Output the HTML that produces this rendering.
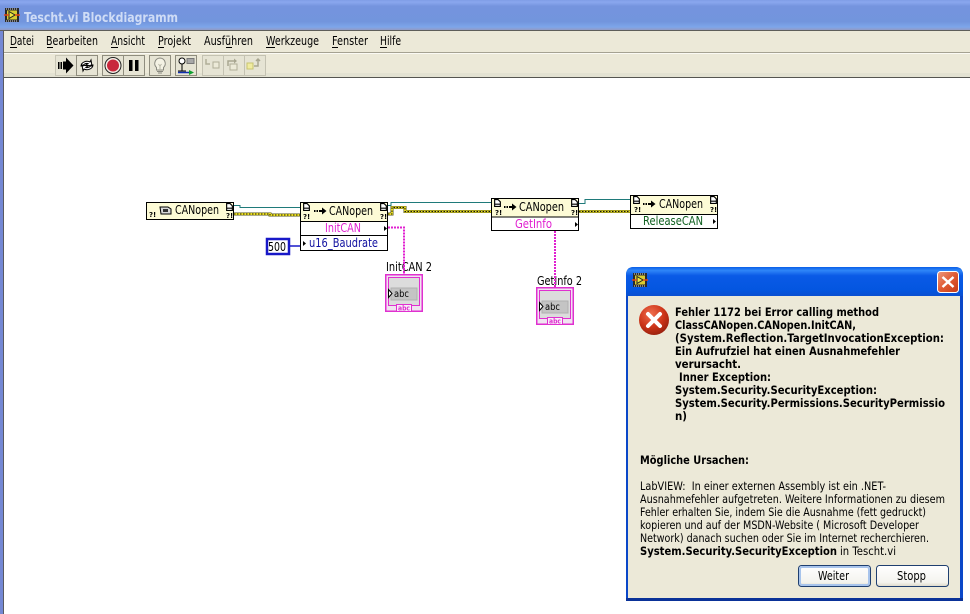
<!DOCTYPE html>
<html><head><meta charset="utf-8"><title>Tescht.vi Blockdiagramm</title>
<style>
html,body{margin:0;padding:0;background:#fff;width:970px;height:614px;overflow:hidden}
svg{display:block}
text{font-family:"DejaVu Sans","Liberation Sans",sans-serif;font-size:11.5px;fill:#000;white-space:pre}
.b{font-weight:bold}
.n{font-size:12px}
.q{font-size:7px;font-weight:bold}
</style></head><body>
<svg width="970" height="614" viewBox="0 0 970 614" xmlns="http://www.w3.org/2000/svg">
<defs>
<linearGradient id="tb" x1="0" y1="0" x2="0" y2="1">
<stop offset="0" stop-color="#7f9de6"/><stop offset=".07" stop-color="#8aa7ee"/><stop offset=".2" stop-color="#7594de"/><stop offset=".7" stop-color="#7295dd"/><stop offset=".87" stop-color="#7da6ea"/><stop offset=".95" stop-color="#8f9ccc"/><stop offset="1" stop-color="#8f94b0"/>
</linearGradient>
<linearGradient id="dt" x1="0" y1="0" x2="0" y2="1">
<stop offset="0" stop-color="#0a5fe8"/><stop offset=".12" stop-color="#2f86f8"/><stop offset=".3" stop-color="#0a5ae6"/><stop offset=".8" stop-color="#0456e0"/><stop offset="1" stop-color="#0a4fd0"/>
</linearGradient>
<radialGradient id="er" cx=".4" cy=".3" r=".8"><stop offset="0" stop-color="#f07050"/><stop offset=".55" stop-color="#cc3418"/><stop offset="1" stop-color="#8c1c0c"/></radialGradient>
<linearGradient id="cl" x1="0" y1="0" x2="1" y2="1"><stop offset="0" stop-color="#ec9a80"/><stop offset=".5" stop-color="#e05a32"/><stop offset="1" stop-color="#c43a16"/></linearGradient>
<linearGradient id="btn" x1="0" y1="0" x2="0" y2="1"><stop offset="0" stop-color="#fff"/><stop offset=".8" stop-color="#f4f3ee"/><stop offset="1" stop-color="#dcd8c8"/></linearGradient>
<symbol id="doc" viewBox="0 0 6 7" width="7" height="8"><path d="M.5.5H3.5L5.5 2.5V6.5H.5Z M.5 4.5H5.5" fill="#fff" stroke="#000" stroke-width="1"/></symbol>
<symbol id="arr" viewBox="0 0 13 8" width="13" height="8"><path d="M0 3h1.500v2H0zM2.500 3h1.500v2H2.500zM5 3h3V0.500L12.500 4 8 7.500V5H5z" fill="#000"/></symbol>
<symbol id="vi" viewBox="0 0 16 14" width="16" height="14"><rect x="1" y="0" width="14" height="14" fill="#2a2a2a"/><path d="M2 1h1M4 1h1M6 1h1M8 1h1M10 1h1M12 1h1M2 13h1M4 13h1M6 13h1M8 13h1M10 13h1M12 13h1" stroke="#ddd" stroke-width="1"/><rect x="3" y="2.500" width="10" height="9" fill="#d8cc30"/><path d="M5 3.500L11 7 5 10.500Z" fill="#f0e840" stroke="#222"/><path d="M0 7H5M11 7H16" stroke="#e04818" stroke-width="1.500"/></symbol>
</defs>

<!-- window chrome -->
<rect width="970" height="614" fill="#fff"/>
<rect width="970" height="31" fill="url(#tb)"/>
<rect y="30" width="970" height="1.500" fill="#5e5e5a"/>
<rect x="0" y="31" width="3" height="583" fill="#7488d4"/>
<rect x="3" y="31" width="1" height="583" fill="#5a5a60"/>
<rect x="4" y="31" width="966" height="21" fill="#ece9d8"/>
<rect x="4" y="52" width="966" height="1" fill="#a5a292"/>
<rect x="4" y="53" width="966" height="1" fill="#fbfaf4"/>
<rect x="4" y="54" width="966" height="23" fill="#ece9d8"/>
<rect x="4" y="73" width="966" height="4" fill="#e3e2d2"/>
<rect x="4" y="77" width="966" height="1" fill="#555550"/>

<use href="#vi" x="4" y="8"/>
<text class="b" x="24" y="22" style="font-size:13.500px;fill:#cfdcf6" textLength="154" lengthAdjust="spacingAndGlyphs">Tescht.vi Blockdiagramm</text>

<!-- menu -->
<g fill="#000">
<text class="n" x="10" y="45" textLength="24" lengthAdjust="spacingAndGlyphs">Datei</text><rect x="10" y="47" width="7" height="1"/>
<text class="n" x="46" y="45" textLength="52" lengthAdjust="spacingAndGlyphs">Bearbeiten</text><rect x="47" y="47" width="6" height="1"/>
<text class="n" x="111" y="45" textLength="34" lengthAdjust="spacingAndGlyphs">Ansicht</text><rect x="111" y="47" width="7" height="1"/>
<text class="n" x="158" y="45" textLength="33" lengthAdjust="spacingAndGlyphs">Projekt</text><rect x="158" y="47" width="6" height="1"/>
<text class="n" x="204" y="45" textLength="49" lengthAdjust="spacingAndGlyphs">Ausführen</text><rect x="226" y="47" width="6" height="1"/>
<text class="n" x="266" y="45" textLength="53" lengthAdjust="spacingAndGlyphs">Werkzeuge</text><rect x="266" y="47" width="9" height="1"/>
<text class="n" x="332" y="45" textLength="36" lengthAdjust="spacingAndGlyphs">Fenster</text><rect x="332" y="47" width="6" height="1"/>
<text class="n" x="380" y="45" textLength="21" lengthAdjust="spacingAndGlyphs">Hilfe</text><rect x="380" y="47" width="7" height="1"/>
</g>

<!-- toolbar -->
<g fill="#e6e4d4" stroke="#8f8d7e">
<rect x="55.500" y="55.500" width="21" height="20" stroke="#c8c6b6"/>
<rect x="76.500" y="55.500" width="21" height="20"/>
<rect x="102.500" y="55.500" width="21" height="20"/><rect x="123.500" y="55.500" width="21" height="20"/>
<rect x="149.500" y="55.500" width="21" height="20"/>
<rect x="175.500" y="55.500" width="21" height="20"/>
<rect x="202.500" y="55.500" width="21" height="20" stroke="#c4c2b2"/><rect x="223.500" y="55.500" width="21" height="20" stroke="#c4c2b2"/><rect x="244.500" y="55.500" width="21" height="20" stroke="#c4c2b2"/>
</g>
<path d="M58 62h1.500v7H58zM60.500 62h1.500v7h-1.500zM63 61.500h3V57.500l7.500 8-7.500 8v-4h-3z" fill="#000"/>
<path d="M81 66a6 5 0 0 1 9-4l1-2 1 6-6-1 2-1.500a4 3 0 0 0-5 2.500zM93 65a6 5 0 0 1-9 4l-1 2-1-6 6 1-2 1.500a4 3 0 0 0 5-2.500z" fill="#fff" stroke="#000"/>
<circle cx="113" cy="65.500" r="8" fill="#f4f0e8" stroke="#222"/><circle cx="113" cy="65.500" r="6" fill="#c8283c"/>
<rect x="129" y="60" width="3.500" height="11" fill="#000"/><rect x="135" y="60" width="3.500" height="11" fill="#000"/>
<path d="M160 58a5.500 5.500 0 0 1 3.500 9.500v2.500h-7v-2.500A5.500 5.500 0 0 1 160 58z" fill="#f4f2e4" stroke="#8a8a80"/><path d="M157 71.500h6M158 73h4" stroke="#8a8a80"/><path d="M158.500 64l1.500 2 1.500-2M160 66v4" fill="none" stroke="#b8b8a8"/>
<circle cx="182" cy="61" r="3" fill="#fff" stroke="#000"/><path d="M182 64v7M178 71h8" stroke="#000" fill="none"/><rect x="187" y="58.500" width="7" height="5" fill="#a8a8a8" stroke="#777"/><path d="M178 72.500H189" stroke="#1030b0" stroke-width="1.500"/><path d="M189 70l5 2.500-5 2.500z" fill="#10a030"/>
<path d="M206 59v5h4" fill="none" stroke="#b0ae98" stroke-width="1.500"/><rect x="213" y="62" width="6" height="6" fill="#ecead8" stroke="#b0ae98"/>
<path d="M228 66v-5h8" fill="none" stroke="#a8a690" stroke-width="1.500"/><path d="M234 58.500l3 2.500-3 2.500z" fill="#a8a690"/><rect x="230" y="64" width="7" height="6" fill="#ecead8" stroke="#b0ae98"/>
<rect x="247" y="63" width="6" height="6" fill="#f0eca0" stroke="#c8c470"/><path d="M254 66h4v-6M256 61l2-2 2 2" fill="none" stroke="#a8a690" stroke-width="1.500"/>

<!-- teal wires -->
<path d="M234 205.500H240V207.500H300M388 205.500H391V202.500H491M579 203.500H585V199.500H630" fill="none" stroke="#1f7a7a" stroke-width="1"/>
<!-- error wires -->
<g fill="none">
<path d="M234 214H270V215H300M388 214H392V207.500H405V211.500H491M579 211.500H630" stroke="#5a5a20" stroke-width="3"/>
<path d="M234 214H270V215H300M388 214H392V207.500H405V211.500H491M579 211.500H630" stroke="#e8dc20" stroke-width="2"/>
<path d="M234 214H270V215H300M388 214H392V207.500H405V211.500H491M579 211.500H630" stroke="#111" stroke-width="1" stroke-dasharray="1.500 1.500"/>
</g>
<!-- pink wires -->
<path d="M388 227.500H404V274M555 231V288" fill="none" stroke="#e020d0" stroke-width="2" stroke-dasharray="2 1"/>
<path d="M289 246H300" stroke="#1818c8" stroke-width="1.500"/>

<!-- constructor -->
<rect x="146.500" y="202.500" width="87" height="17" fill="#fdfbd6" stroke="#000"/>
<text class="q" x="149" y="217">?!</text>
<path d="M160 207h8l3 2v5h-10z" fill="#d8d8d8" stroke="#000"/><rect x="163" y="209" width="5" height="3" fill="#333"/>
<text class="n" x="175" y="214" textLength="44" lengthAdjust="spacingAndGlyphs">CANopen</text>
<use href="#doc" x="226" y="203"/><text class="q" x="226" y="218">?!</text>

<!-- node InitCAN -->
<rect x="300.500" y="202.500" width="87" height="48" fill="#fff" stroke="#000"/>
<rect x="301" y="203" width="86" height="18" fill="#fdfbd6"/>
<path d="M300 221.500H388M300 235.500H388" stroke="#000"/>
<use href="#doc" x="303" y="203"/><text class="q" x="303" y="219">?!</text>
<use href="#arr" x="314" y="207"/>
<text class="n" x="329" y="215" textLength="44" lengthAdjust="spacingAndGlyphs">CANopen</text>
<use href="#doc" x="380" y="203"/><text class="q" x="380" y="219">?!</text>
<text class="n" x="325" y="232" textLength="36" lengthAdjust="spacingAndGlyphs" style="fill:#e020d0">InitCAN</text>
<path d="M384 226l3 2.500-3 2.500z" fill="#000"/>
<text class="n" x="309" y="247" textLength="69" lengthAdjust="spacingAndGlyphs" style="fill:#1010a0">u16_Baudrate</text>
<path d="M303 241l3 2.500-3 2.500z" fill="#000"/>

<!-- constant -->
<rect x="267" y="239" width="22" height="15" fill="#fff" stroke="#1818c8" stroke-width="2.500"/>
<text class="n" x="268" y="251" textLength="18" lengthAdjust="spacingAndGlyphs">500</text>

<!-- node GetInfo -->
<rect x="491.500" y="198.500" width="87" height="32" fill="#fff" stroke="#000"/>
<rect x="492" y="199" width="86" height="18" fill="#fdfbd6"/>
<path d="M491 217H579" stroke="#000"/>
<use href="#doc" x="494" y="199"/><text class="q" x="495" y="215">?!</text>
<use href="#arr" x="504" y="203"/>
<text class="n" x="519" y="211" textLength="45" lengthAdjust="spacingAndGlyphs">CANopen</text>
<use href="#doc" x="571" y="199"/><text class="q" x="571" y="215">?!</text>
<text class="n" x="515" y="228" textLength="37" lengthAdjust="spacingAndGlyphs" style="fill:#e020d0">GetInfo</text>
<path d="M575 222l3 2.500-3 2.500z" fill="#000"/>

<!-- node ReleaseCAN -->
<rect x="630.500" y="195.500" width="87" height="33" fill="#fff" stroke="#000"/>
<rect x="631" y="196" width="86" height="18" fill="#fdfbd6"/>
<path d="M630 214.500H718" stroke="#000"/>
<use href="#doc" x="633" y="196"/><text class="q" x="634" y="212">?!</text>
<use href="#arr" x="643" y="200"/>
<text class="n" x="659" y="208" textLength="44" lengthAdjust="spacingAndGlyphs">CANopen</text>
<use href="#doc" x="710" y="196"/><text class="q" x="710" y="212">?!</text>
<text class="n" x="643" y="225" textLength="60" lengthAdjust="spacingAndGlyphs" style="fill:#106020">ReleaseCAN</text>
<path d="M713 219l3 2.500-3 2.500z" fill="#000"/>

<!-- labels -->
<text class="n" x="386" y="271" textLength="46" lengthAdjust="spacingAndGlyphs">InitCAN 2</text>
<text class="n" x="537" y="285" textLength="45" lengthAdjust="spacingAndGlyphs">GetInfo 2</text>
<path d="M404 262V274M555 276V288" stroke="#e020d0" stroke-width="2" stroke-dasharray="2 1"/>

<!-- indicator 1 -->
<g transform="translate(385,274)">
<rect x=".75" y=".75" width="36.500" height="36.500" fill="#f0e4f0" stroke="#e030d0" stroke-width="1.500"/>
<rect x="3.500" y="3.500" width="31" height="28" fill="#dcdcdc" stroke="#e030d0"/>
<rect x="6" y="14" width="26" height="12" fill="#c4c4c4" stroke="#b0b0b0"/>
<text x="9" y="23" style="font-size:9.500px" textLength="15" lengthAdjust="spacingAndGlyphs">abc</text>
<path d="M3.500 15.500l3.500 4-3.500 4z" fill="#fff" stroke="#000"/>
<rect x="11.500" y="30.500" width="15" height="7" fill="#f8eef8" stroke="#e030d0"/>
<text x="13" y="36.500" class="b" style="font-size:7px;fill:#e030d0" textLength="12" lengthAdjust="spacingAndGlyphs">abc</text>
</g>
<!-- indicator 2 -->
<g transform="translate(536,287)">
<rect x=".75" y=".75" width="36.500" height="36.500" fill="#f0e4f0" stroke="#e030d0" stroke-width="1.500"/>
<rect x="3.500" y="3.500" width="31" height="28" fill="#dcdcdc" stroke="#e030d0"/>
<rect x="6" y="14" width="26" height="12" fill="#c4c4c4" stroke="#b0b0b0"/>
<text x="9" y="23" style="font-size:9.500px" textLength="15" lengthAdjust="spacingAndGlyphs">abc</text>
<path d="M3.500 15.500l3.500 4-3.500 4z" fill="#fff" stroke="#000"/>
<rect x="11.500" y="30.500" width="15" height="7" fill="#f8eef8" stroke="#e030d0"/>
<text x="13" y="36.500" class="b" style="font-size:7px;fill:#e030d0" textLength="12" lengthAdjust="spacingAndGlyphs">abc</text>
</g>

<!-- dialog -->
<path d="M626 601V275Q626 267 634 267H955Q963 267 963 275V601Z" fill="#0a47c8"/>
<path d="M626 296V275Q626 267 634 267H955Q963 267 963 275V296Z" fill="url(#dt)"/>
<rect x="628" y="296" width="332" height="302" fill="#ece9d8"/>
<rect x="626" y="598" width="337" height="3" fill="#0a3298"/>
<use href="#vi" x="632" y="273"/>
<rect x="937.500" y="271.500" width="21" height="21" rx="3" fill="url(#cl)" stroke="#fff"/>
<path d="M942.500 277L953.500 287M953.500 277L942.500 287" stroke="#fff" stroke-width="2.500"/>
<circle cx="654" cy="320" r="15" fill="url(#er)"/>
<path d="M648 314L660 326M660 314L648 326" stroke="#fff" stroke-width="4" stroke-linecap="round"/>

<text class="b" x="675" y="316" textLength="204" lengthAdjust="spacingAndGlyphs">Fehler 1172 bei Error calling method</text>
<text class="b" x="675" y="329" textLength="181" lengthAdjust="spacingAndGlyphs">ClassCANopen.CANopen.InitCAN,</text>
<text class="b" x="675" y="342" textLength="269" lengthAdjust="spacingAndGlyphs">(System.Reflection.TargetInvocationException:</text>
<text class="b" x="675" y="355" textLength="225" lengthAdjust="spacingAndGlyphs">Ein Aufrufziel hat einen Ausnahmefehler</text>
<text class="b" x="675" y="368" textLength="66" lengthAdjust="spacingAndGlyphs">verursacht.</text>
<text class="b" x="679" y="381" textLength="92" lengthAdjust="spacingAndGlyphs">Inner Exception:</text>
<text class="b" x="675" y="394" textLength="202" lengthAdjust="spacingAndGlyphs">System.Security.SecurityException:</text>
<text class="b" x="675" y="407" textLength="270" lengthAdjust="spacingAndGlyphs">System.Security.Permissions.SecurityPermissio</text>
<text class="b" x="675" y="420" textLength="12" lengthAdjust="spacingAndGlyphs">n)</text>
<text class="b" x="640" y="464" textLength="109" lengthAdjust="spacingAndGlyphs">Mögliche Ursachen:</text>
<text x="640" y="490" textLength="246" lengthAdjust="spacingAndGlyphs">LabVIEW:  In einer externen Assembly ist ein .NET-</text>
<text x="640" y="503" textLength="305" lengthAdjust="spacingAndGlyphs">Ausnahmefehler aufgetreten. Weitere Informationen zu diesem</text>
<text x="640" y="516" textLength="286" lengthAdjust="spacingAndGlyphs">Fehler erhalten Sie, indem Sie die Ausnahme (fett gedruckt)</text>
<text x="640" y="529" textLength="279" lengthAdjust="spacingAndGlyphs">kopieren und auf der MSDN-Website ( Microsoft Developer</text>
<text x="640" y="542" textLength="289" lengthAdjust="spacingAndGlyphs">Network) danach suchen oder Sie im Internet recherchieren.</text>
<text class="b" x="640" y="555" textLength="197" lengthAdjust="spacingAndGlyphs">System.Security.SecurityException</text>
<text x="840" y="555" textLength="56" lengthAdjust="spacingAndGlyphs">in Tescht.vi</text>

<rect x="798.500" y="565.500" width="72" height="21" rx="3" fill="url(#btn)" stroke="#1f3f70"/>
<rect x="800" y="567" width="69" height="18" rx="2" fill="none" stroke="#a8c4ec" stroke-width="2"/>
<text class="n" x="818" y="580" textLength="31" lengthAdjust="spacingAndGlyphs">Weiter</text>
<rect x="876.500" y="565.500" width="72" height="21" rx="3" fill="url(#btn)" stroke="#1f3f70"/>
<text class="n" x="897" y="580" textLength="29" lengthAdjust="spacingAndGlyphs">Stopp</text>
</svg>
</body></html>
